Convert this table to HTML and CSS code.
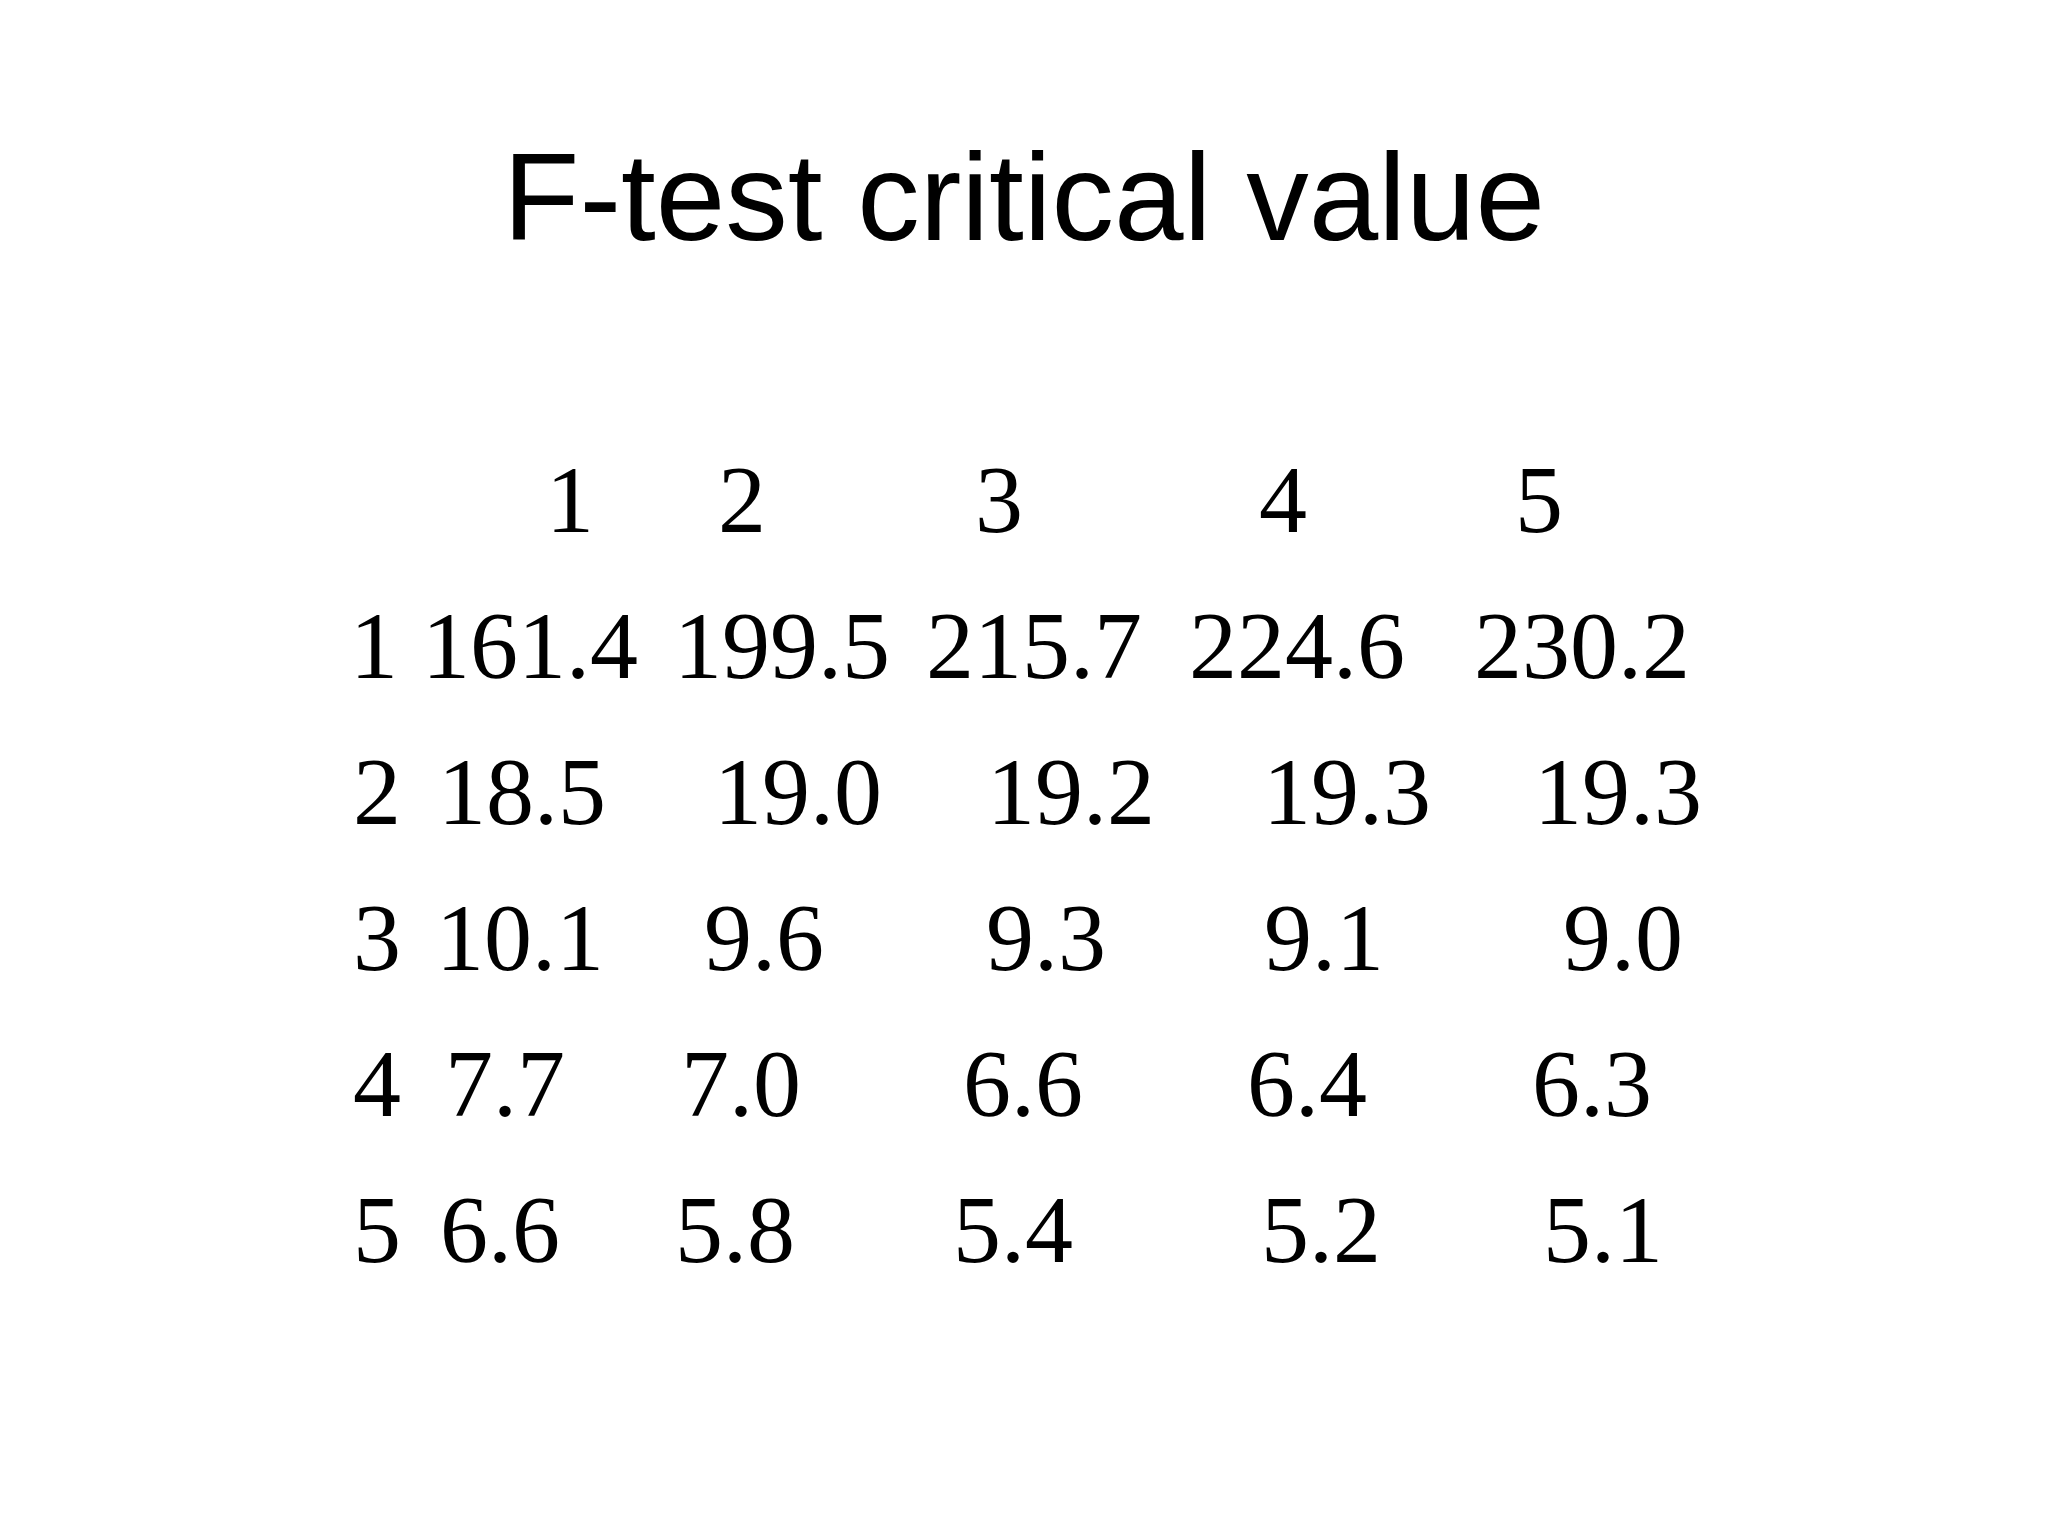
FILE: index.html
```html
<!DOCTYPE html>
<html lang="en">
<head>
<meta charset="utf-8">
<title>F-test critical value</title>
<link rel="stylesheet" href="styles.css">
</head>
<body>
<main class="slide">
  <h1 class="title">F-test critical value</h1>
  <div class="table">
    <div class="row r0"><span></span><span>1</span><span>2</span><span>3</span><span>4</span><span>5</span></div>
    <div class="row r1"><span>1</span><span>161.4</span><span>199.5</span><span>215.7</span><span>224.6</span><span>230.2</span></div>
    <div class="row r2 shift"><span>2</span><span>18.5</span><span>19.0</span><span>19.2</span><span>19.3</span><span>19.3</span></div>
    <div class="row r3 shift"><span>3</span><span>10.1</span><span>9.6</span><span>9.3</span><span>9.1</span><span>9.0</span></div>
    <div class="row r4 shift"><span>4</span><span>7.7</span><span>7.0</span><span>6.6</span><span>6.4</span><span>6.3</span></div>
    <div class="row r5 shift"><span>5</span><span>6.6</span><span>5.8</span><span>5.4</span><span>5.2</span><span>5.1</span></div>
  </div>
</main>
</body>
</html>
```

FILE: styles.css
```css
html, body {
  margin: 0;
  padding: 0;
  background: #ffffff;
}

.slide {
  width: 2048px;
  height: 1536px;
  box-sizing: border-box;
  padding-top: 134px;
  background: #ffffff;
  color: #000000;
  overflow: hidden;
}

.title {
  margin: 0;
  font-family: "Liberation Sans", Arial, sans-serif;
  font-weight: 400;
  font-size: 125px;
  line-height: 1;
  text-align: center;
  color: #000000;
}

.table {
  margin-top: 168px;
  padding-left: 350px;
  font-family: "Liberation Serif", "Times New Roman", serif;
  font-size: 96px;
  line-height: 146px;
  color: #000000;
}

.row {
  display: grid;
  white-space: nowrap;
}

.row.shift > span:first-child {
  padding-left: 3px;
}

.r0 { grid-template-columns: 196px 172px 257px 284px 256px auto; }
.r1 { grid-template-columns: 72px 252px 252px 263px 285px auto; }
.r2 { grid-template-columns: 88px 276px 273px 276px 271px auto; }
.r3 { grid-template-columns: 86px 268px 282px 278px 299px auto; }
.r4 { grid-template-columns: 95px 236px 282px 284px 285px auto; }
.r5 { grid-template-columns: 90px 235px 278px 308px 282px auto; }
```
